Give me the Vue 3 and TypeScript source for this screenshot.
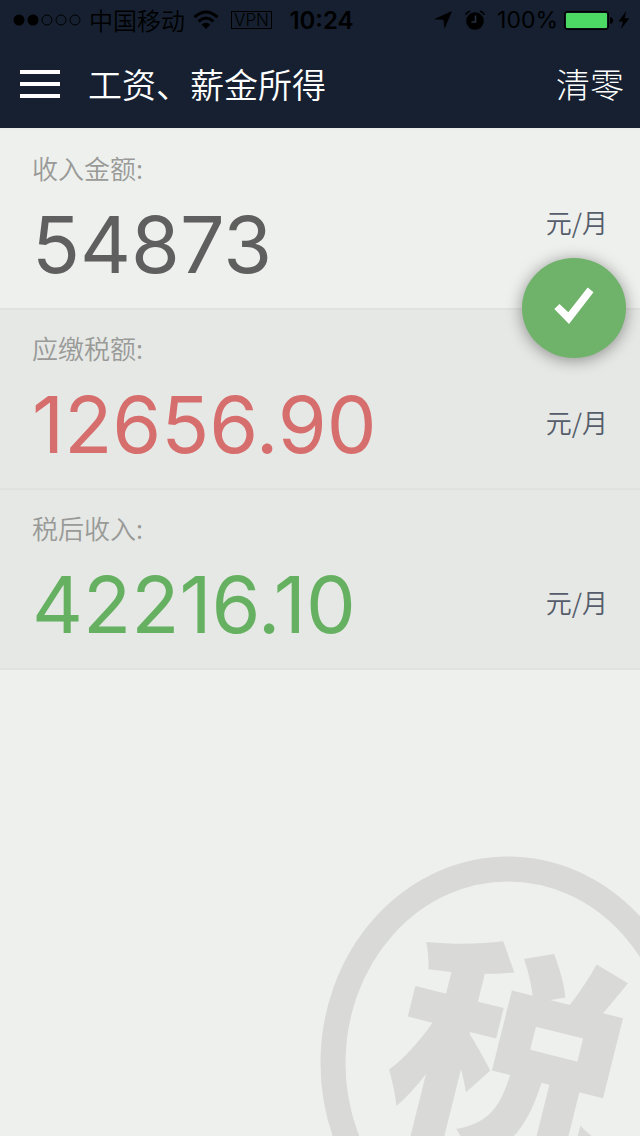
<script setup lang="ts">
import { computed, ref } from 'vue'

interface Bracket {
  limit: number
  rate: number
  deduction: number
}

const THRESHOLD = 3500
const brackets: Bracket[] = [
  { limit: 1500, rate: 0.03, deduction: 0 },
  { limit: 4500, rate: 0.1, deduction: 105 },
  { limit: 9000, rate: 0.2, deduction: 555 },
  { limit: 35000, rate: 0.25, deduction: 1005 },
  { limit: 55000, rate: 0.3, deduction: 2755 },
  { limit: 80000, rate: 0.35, deduction: 5505 },
  { limit: Infinity, rate: 0.45, deduction: 13505 },
]

const draft = ref('54873')
const income = ref(54873)

const tax = computed(() => {
  const taxable = Math.max(0, income.value - THRESHOLD)
  const bracket = brackets.find((b) => taxable <= b.limit)!
  return taxable * bracket.rate - bracket.deduction
})
const net = computed(() => income.value - tax.value)

function calculate(): void {
  income.value = Number(draft.value) || 0
}

function reset(): void {
  draft.value = '0'
  income.value = 0
}
</script>

<template>
  <div class="page">
    <div class="top">
      <div class="status">
        <div class="group">
          <svg class="signal" width="68" height="12" viewBox="0 0 68 12" aria-hidden="true">
            <circle cx="6" cy="6" r="5.5" />
            <circle cx="20" cy="6" r="5.5" />
            <g fill="none" stroke="#000" stroke-width="1">
              <circle cx="34" cy="6" r="5" />
              <circle cx="48" cy="6" r="5" />
              <circle cx="62" cy="6" r="5" />
            </g>
          </svg>
          <span class="carrier">中国移动</span>
          <svg class="wifi" width="26" height="20" viewBox="0 0 26 20" aria-hidden="true">
            <g fill="none" stroke="#000" stroke-width="3">
              <path d="M1.5 7.2Q13 -3.2 24.500 7.200" />
              <path d="M5.600 11.300Q13 4.800 20.400 11.300" />
            </g>
            <path d="M13 19L8.600 14.600Q13 11 17.400 14.600Z" />
          </svg>
          <span class="vpn">VPN</span>
        </div>
        <span class="time">10:24</span>
        <div class="group right">
          <svg width="20" height="20" viewBox="0 0 20 20" aria-hidden="true">
            <path d="M19 1L11.500 19L10.500 9.800L1 9.200Z" />
          </svg>
          <svg class="alarm" width="20" height="20" viewBox="0 0 20 20" aria-hidden="true">
            <circle cx="10" cy="11" r="8.800" />
            <path d="M0.800 4.800Q1.500 1.800 5.200 1.200M19.200 4.800Q18.500 1.800 14.800 1.200" fill="none" stroke="#000" stroke-width="1.500" />
            <path d="M10.500 5.500V12H6.500" fill="none" stroke="#263142" stroke-width="1.500" />
          </svg>
          <span class="percent">100%</span>
          <svg class="battery" width="50" height="20" viewBox="0 0 50 20" aria-hidden="true">
            <rect x="0.700" y="1.700" width="43.600" height="17.600" rx="3" fill="none" stroke="#000" stroke-width="1.400" />
            <rect x="2" y="3" width="41" height="15" rx="1" fill="#4cd964" />
            <path d="M46 7Q49 7.500 49 10.500Q49 13.500 46 14Z" />
          </svg>
          <svg class="bolt" width="12" height="20" viewBox="0 0 12 20" aria-hidden="true">
            <path d="M8.200 1L0.500 11.500H5L3 19L11.500 8.200H6.800Z" />
          </svg>
        </div>
      </div>
      <header class="nav">
        <button class="menu" type="button" aria-label="菜单">
          <svg width="40" height="30" viewBox="0 0 40 30" aria-hidden="true">
            <path d="M0 3H40M0 15H40M0 27H40" stroke="#fff" stroke-width="4" />
          </svg>
        </button>
        <h1>工资、薪金所得</h1>
        <button class="clear" type="button" @click="reset">清零</button>
      </header>
    </div>

    <form class="rows" @submit.prevent="calculate">
      <div class="row entry">
        <div class="field">
          <label for="income">收入金额:</label>
          <input id="income" v-model="draft" class="value" type="text" inputmode="decimal" />
        </div>
        <span class="unit">元/月</span>
        <button class="confirm" type="submit" aria-label="计算">
          <svg width="44" height="40" viewBox="0 0 44 40" aria-hidden="true">
            <path d="M2.300 23L17 38L41.500 6.300L35.700 1.500L16.300 26.300L7.500 18Z" fill="#fff" />
          </svg>
        </button>
      </div>
      <div class="row result">
        <div class="field">
          <label for="tax">应缴税额:</label>
          <output id="tax" class="value tax">{{ tax.toFixed(2) }}</output>
        </div>
        <span class="unit">元/月</span>
      </div>
      <div class="row result">
        <div class="field">
          <label for="net">税后收入:</label>
          <output id="net" class="value net">{{ net.toFixed(2) }}</output>
        </div>
        <span class="unit">元/月</span>
      </div>
    </form>

    <svg class="seal" width="320" height="296" viewBox="320 840 320 296" aria-hidden="true">
      <ellipse cx="508" cy="1063" rx="175" ry="194" fill="none" stroke="#d9d9d7" stroke-width="25" />
      <text x="508" y="1144" text-anchor="middle" transform="rotate(14 508 1063)">税</text>
    </svg>
  </div>
</template>

<style>
body {
  margin: 0;
  background: #eef0ed;
}
</style>

<style scoped>
.page {
  position: relative;
  min-height: 100vh;
  overflow: hidden;
  background: #eef0ed;
  font-family: Inter, "Noto Sans CJK SC", sans-serif;
}

button {
  padding: 0;
  border: 0;
  background: none;
  font-family: inherit;
  cursor: pointer;
}

svg {
  display: block;
  flex: none;
}

.top {
  background: #162031;
}

.status {
  display: grid;
  grid-template-columns: 1fr auto 1fr;
  align-items: center;
  height: 40px;
  padding: 0 10px 0 13px;
  color: #000;
  font-size: 24px;
  white-space: nowrap;
}

.group {
  display: flex;
  align-items: center;
}

.right {
  justify-content: flex-end;
}

.carrier {
  margin: 0 8px;
  font-family: "Noto Sans CJK SC", sans-serif;
  font-weight: 350;
  line-height: 40px;
}

.vpn {
  margin-left: 12px;
  padding: 0 2px;
  border: 1px solid #000;
  font-size: 17px;
  font-weight: 300;
  line-height: 16px;
}

.time {
  font-size: 24px;
  font-weight: 600;
}

.alarm {
  margin: 0 12px;
}

.percent {
  margin-right: 6px;
  font-size: 23px;
}

.bolt {
  margin-left: 4px;
}

.nav {
  display: flex;
  align-items: center;
  height: 88px;
  padding: 0 16px 0 20px;
}

.menu {
  margin-right: 28px;
}

h1,
.clear {
  margin: 0;
  color: #fff;
  font-family: "Noto Sans CJK SC", sans-serif;
  font-size: 34px;
  font-weight: 350;
  line-height: 48px;
}

.clear {
  margin-left: auto;
  font-weight: 300;
}

.rows {
  border-top: 2px solid #e9ebe8;
}

.row {
  position: relative;
  display: flex;
  align-items: center;
  padding: 20px 32px 24px;
  border-bottom: 2px solid #e0e2df;
}

.result {
  background: #e6e8e5;
}

.field {
  display: flex;
  flex: 1;
  flex-direction: column;
  gap: 18px;
  min-width: 0;
}

label {
  color: #999a98;
  font-family: "Noto Sans CJK SC", sans-serif;
  font-size: 26px;
  font-weight: 350;
  line-height: 36px;
}

.value {
  box-sizing: border-box;
  width: 100%;
  height: 80px;
  padding: 0;
  border: 0;
  outline: 0;
  background: none;
  color: #5f5f5f;
  font-family: Inter, sans-serif;
  font-size: 79px;
  line-height: 80px;
}

.tax {
  color: #d76e6e;
}

.net {
  color: #66b161;
}

.unit {
  padding-top: 10px;
  color: #555c6b;
  font-family: "Noto Sans CJK SC", sans-serif;
  font-size: 26px;
  font-weight: 350;
  line-height: 40px;
}

.result .unit {
  padding-top: 50px;
}

.confirm {
  position: absolute;
  right: 14px;
  bottom: -50px;
  z-index: 1;
  display: grid;
  place-items: center;
  width: 104px;
  height: 100px;
  padding-bottom: 4px;
  border-radius: 50%;
  background: #6fb26a;
  box-shadow: 0 2px 16px rgba(0, 0, 0, 0.4);
}

.seal {
  position: absolute;
  right: 0;
  bottom: 0;
}

.seal text {
  fill: #d9d9d7;
  font-family: "Noto Sans CJK SC", sans-serif;
  font-size: 232px;
  font-weight: 900;
}
</style>
